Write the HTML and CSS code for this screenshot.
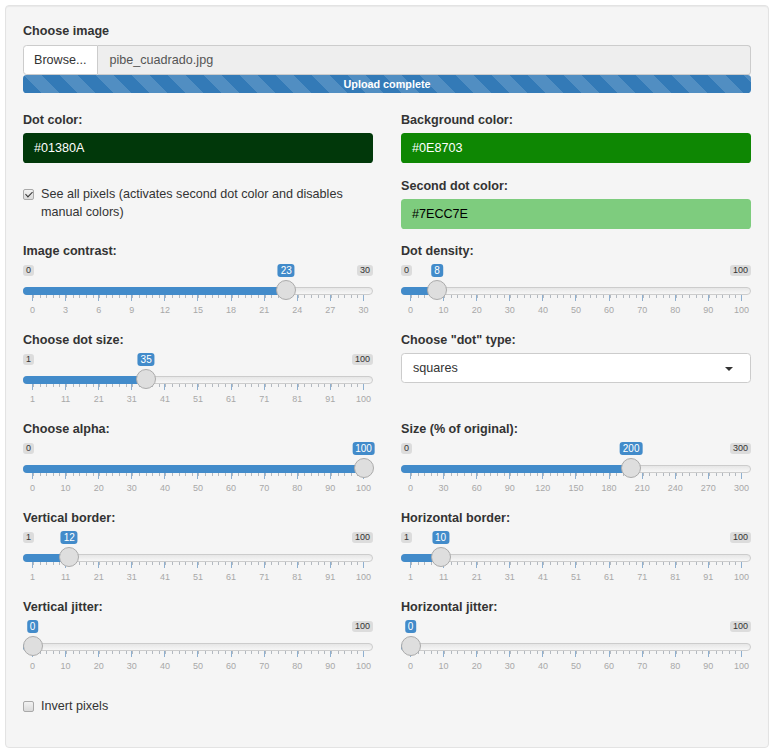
FILE: index.html
```html
<!DOCTYPE html>
<html>
<head>
<meta charset="utf-8">
<title>Dots</title>
<link rel="stylesheet" href="styles.css">
</head>
<body>
<div class="well">
  <div class="form-group file-group">
    <label class="control-label">Choose image</label>
    <div class="input-group">
      <span class="btn-browse">Browse...</span>
      <span class="file-name">pibe_cuadrado.jpg</span>
    </div>
    <div class="progress"><div class="progress-bar">Upload complete</div></div>
  </div>

  <div class="cols">
    <div class="form-group">
      <label class="control-label">Dot color:</label>
      <div class="color-input sw-dot">#01380A</div>
    </div>
    <div class="form-group">
      <label class="control-label">Background color:</label>
      <div class="color-input sw-bg">#0E8703</div>
    </div>

    <div class="checkbox first">
      <label><input class="cb" type="checkbox" checked><span>See all pixels (activates second dot color and disables manual colors)</span></label>
    </div>
    <div class="form-group tight">
      <label class="control-label">Second dot color:</label>
      <div class="color-input sw-second">#7ECC7E</div>
    </div>

    <div class="form-group">
      <label class="control-label">Image contrast:</label>
      <div class="irs" style="--p:0.76667">
        <span class="irs-line"></span><span class="irs-bar"></span>
        <span class="irs-min">0</span><span class="irs-max">30</span>
        <span class="irs-single">23</span><span class="irs-handle"></span>
        <div class="irs-grid">
          <span class="t"><i></i><b>0</b></span><span class="t"><i></i><b>3</b></span><span class="t"><i></i><b>6</b></span><span class="t"><i></i><b>9</b></span><span class="t"><i></i><b>12</b></span><span class="t"><i></i><b>15</b></span><span class="t"><i></i><b>18</b></span><span class="t"><i></i><b>21</b></span><span class="t"><i></i><b>24</b></span><span class="t"><i></i><b>27</b></span><span class="t"><i></i><b>30</b></span>
        </div>
      </div>
    </div>
    <div class="form-group">
      <label class="control-label">Dot density:</label>
      <div class="irs" style="--p:0.08">
        <span class="irs-line"></span><span class="irs-bar"></span>
        <span class="irs-min">0</span><span class="irs-max">100</span>
        <span class="irs-single">8</span><span class="irs-handle"></span>
        <div class="irs-grid">
          <span class="t"><i></i><b>0</b></span><span class="t"><i></i><b>10</b></span><span class="t"><i></i><b>20</b></span><span class="t"><i></i><b>30</b></span><span class="t"><i></i><b>40</b></span><span class="t"><i></i><b>50</b></span><span class="t"><i></i><b>60</b></span><span class="t"><i></i><b>70</b></span><span class="t"><i></i><b>80</b></span><span class="t"><i></i><b>90</b></span><span class="t"><i></i><b>100</b></span>
        </div>
      </div>
    </div>

    <div class="form-group">
      <label class="control-label">Choose dot size:</label>
      <div class="irs" style="--p:0.34343">
        <span class="irs-line"></span><span class="irs-bar"></span>
        <span class="irs-min">1</span><span class="irs-max">100</span>
        <span class="irs-single">35</span><span class="irs-handle"></span>
        <div class="irs-grid">
          <span class="t"><i></i><b>1</b></span><span class="t"><i></i><b>11</b></span><span class="t"><i></i><b>21</b></span><span class="t"><i></i><b>31</b></span><span class="t"><i></i><b>41</b></span><span class="t"><i></i><b>51</b></span><span class="t"><i></i><b>61</b></span><span class="t"><i></i><b>71</b></span><span class="t"><i></i><b>81</b></span><span class="t"><i></i><b>91</b></span><span class="t"><i></i><b>100</b></span>
        </div>
      </div>
    </div>
    <div class="form-group">
      <label class="control-label">Choose "dot" type:</label>
      <div class="select">squares</div>
    </div>

    <div class="form-group">
      <label class="control-label">Choose alpha:</label>
      <div class="irs" style="--p:1">
        <span class="irs-line"></span><span class="irs-bar"></span>
        <span class="irs-min">0</span>
        <span class="irs-single">100</span><span class="irs-handle"></span>
        <div class="irs-grid">
          <span class="t"><i></i><b>0</b></span><span class="t"><i></i><b>10</b></span><span class="t"><i></i><b>20</b></span><span class="t"><i></i><b>30</b></span><span class="t"><i></i><b>40</b></span><span class="t"><i></i><b>50</b></span><span class="t"><i></i><b>60</b></span><span class="t"><i></i><b>70</b></span><span class="t"><i></i><b>80</b></span><span class="t"><i></i><b>90</b></span><span class="t"><i></i><b>100</b></span>
        </div>
      </div>
    </div>
    <div class="form-group">
      <label class="control-label">Size (% of original):</label>
      <div class="irs" style="--p:0.66667">
        <span class="irs-line"></span><span class="irs-bar"></span>
        <span class="irs-min">0</span><span class="irs-max">300</span>
        <span class="irs-single">200</span><span class="irs-handle"></span>
        <div class="irs-grid">
          <span class="t"><i></i><b>0</b></span><span class="t"><i></i><b>30</b></span><span class="t"><i></i><b>60</b></span><span class="t"><i></i><b>90</b></span><span class="t"><i></i><b>120</b></span><span class="t"><i></i><b>150</b></span><span class="t"><i></i><b>180</b></span><span class="t"><i></i><b>210</b></span><span class="t"><i></i><b>240</b></span><span class="t"><i></i><b>270</b></span><span class="t"><i></i><b>300</b></span>
        </div>
      </div>
    </div>

    <div class="form-group">
      <label class="control-label">Vertical border:</label>
      <div class="irs" style="--p:0.11111">
        <span class="irs-line"></span><span class="irs-bar"></span>
        <span class="irs-min">1</span><span class="irs-max">100</span>
        <span class="irs-single">12</span><span class="irs-handle"></span>
        <div class="irs-grid">
          <span class="t"><i></i><b>1</b></span><span class="t"><i></i><b>11</b></span><span class="t"><i></i><b>21</b></span><span class="t"><i></i><b>31</b></span><span class="t"><i></i><b>41</b></span><span class="t"><i></i><b>51</b></span><span class="t"><i></i><b>61</b></span><span class="t"><i></i><b>71</b></span><span class="t"><i></i><b>81</b></span><span class="t"><i></i><b>91</b></span><span class="t"><i></i><b>100</b></span>
        </div>
      </div>
    </div>
    <div class="form-group">
      <label class="control-label">Horizontal border:</label>
      <div class="irs" style="--p:0.09091">
        <span class="irs-line"></span><span class="irs-bar"></span>
        <span class="irs-min">1</span><span class="irs-max">100</span>
        <span class="irs-single">10</span><span class="irs-handle"></span>
        <div class="irs-grid">
          <span class="t"><i></i><b>1</b></span><span class="t"><i></i><b>11</b></span><span class="t"><i></i><b>21</b></span><span class="t"><i></i><b>31</b></span><span class="t"><i></i><b>41</b></span><span class="t"><i></i><b>51</b></span><span class="t"><i></i><b>61</b></span><span class="t"><i></i><b>71</b></span><span class="t"><i></i><b>81</b></span><span class="t"><i></i><b>91</b></span><span class="t"><i></i><b>100</b></span>
        </div>
      </div>
    </div>

    <div class="form-group">
      <label class="control-label">Vertical jitter:</label>
      <div class="irs" style="--p:0">
        <span class="irs-line"></span><span class="irs-bar"></span>
        <span class="irs-max">100</span>
        <span class="irs-single">0</span><span class="irs-handle"></span>
        <div class="irs-grid">
          <span class="t"><i></i><b>0</b></span><span class="t"><i></i><b>10</b></span><span class="t"><i></i><b>20</b></span><span class="t"><i></i><b>30</b></span><span class="t"><i></i><b>40</b></span><span class="t"><i></i><b>50</b></span><span class="t"><i></i><b>60</b></span><span class="t"><i></i><b>70</b></span><span class="t"><i></i><b>80</b></span><span class="t"><i></i><b>90</b></span><span class="t"><i></i><b>100</b></span>
        </div>
      </div>
    </div>
    <div class="form-group">
      <label class="control-label">Horizontal jitter:</label>
      <div class="irs" style="--p:0">
        <span class="irs-line"></span><span class="irs-bar"></span>
        <span class="irs-max">100</span>
        <span class="irs-single">0</span><span class="irs-handle"></span>
        <div class="irs-grid">
          <span class="t"><i></i><b>0</b></span><span class="t"><i></i><b>10</b></span><span class="t"><i></i><b>20</b></span><span class="t"><i></i><b>30</b></span><span class="t"><i></i><b>40</b></span><span class="t"><i></i><b>50</b></span><span class="t"><i></i><b>60</b></span><span class="t"><i></i><b>70</b></span><span class="t"><i></i><b>80</b></span><span class="t"><i></i><b>90</b></span><span class="t"><i></i><b>100</b></span>
        </div>
      </div>
    </div>

    <div class="checkbox last">
      <label><input class="cb" type="checkbox"><span>Invert pixels</span></label>
    </div>
  </div>
</div>
</body>
</html>
```

FILE: styles.css
```css
* { box-sizing: border-box; }
html, body { margin: 0; padding: 0; background: #fff; }
body {
  font-family: "Liberation Sans", Arial, sans-serif;
  font-size: 12.6px;
  line-height: 18px;
  color: #333;
}

.well {
  margin: 5px 0 0 5px;
  width: 764px;
  height: 743px;
  padding: 16px 17px 17px;
  background: #f5f5f5;
  border: 1px solid #e3e3e3;
  border-radius: 4px;
  box-shadow: inset 0 1px 1px rgba(0, 0, 0, .05);
}

.control-label {
  display: block;
  font-weight: bold;
  margin-bottom: 4.5px;
}

.form-group { margin-bottom: 13.5px; }
.form-group.tight { margin-bottom: 12.5px; }
.file-group { margin-bottom: 18px; }

/* file input */
.input-group { display: flex; height: 30px; }
.btn-browse {
  padding: 0 10px;
  line-height: 28px;
  background: #fff;
  border: 1px solid #ccc;
  border-radius: 3.6px 0 0 3.6px;
  color: #333;
}
.file-name {
  flex: 1;
  padding: 0 12px;
  line-height: 28px;
  background: #eee;
  border: 1px solid #ccc;
  border-left: 0;
  border-radius: 0 3.6px 3.6px 0;
  color: #555;
}
.progress {
  height: 18px;
  border-radius: 3.6px;
  overflow: hidden;
  background: #f5f5f5;
}
.progress-bar {
  height: 100%;
  background-color: #337ab7;
  background-image: linear-gradient(45deg, rgba(255,255,255,.15) 25%, transparent 25%, transparent 50%, rgba(255,255,255,.15) 50%, rgba(255,255,255,.15) 75%, transparent 75%, transparent);
  background-size: 36px 36px;
  color: #fff;
  font-size: 10.8px;
  font-weight: bold;
  text-align: center;
  line-height: 18px;
}

/* two column layout */
.cols {
  display: grid;
  grid-template-columns: 350px 350px;
  column-gap: 28px;
  align-items: start;
}

/* colour inputs */
.color-input {
  height: 30px;
  padding: 0 11px;
  line-height: 30px;
  border-radius: 3.6px;
}
.sw-dot { background: #01380A; color: #fff; }
.sw-bg { background: #0E8703; color: #fff; }
.sw-second { background: #7ECC7E; color: #000; }

/* checkboxes */
.checkbox.first { margin-top: 8px; }
.checkbox.last { margin-top: 10px; }
.checkbox label { display: flex; gap: 7px; }
.cb {
  -webkit-appearance: none;
  appearance: none;
  flex: none;
  position: relative;
  width: 11px;
  height: 11px;
  margin: 4px 0 0 0;
  border: 1px solid #a9a9a9;
  border-radius: 2px;
  background: linear-gradient(#f2f2f2, #dadada);
}
.cb:checked::after {
  content: "";
  position: absolute;
  left: 3px;
  top: 0.5px;
  width: 3px;
  height: 6px;
  border: solid #333;
  border-width: 0 1.5px 1.5px 0;
  transform: rotate(45deg);
}

/* select */
.select {
  position: relative;
  height: 30px;
  line-height: 28px;
  padding: 0 11px;
  background: #fff;
  border: 1px solid #ccc;
  border-radius: 3.6px;
  color: #333;
}
.select::after {
  content: "";
  position: absolute;
  right: 17px;
  top: 13px;
  border: 4px solid transparent;
  border-top-color: #333;
  border-bottom: 0;
}

/* range slider */
.irs {
  position: relative;
  height: 53px;
  padding-top: 31px;
}
.irs-line {
  position: absolute;
  left: 0;
  right: 0;
  top: 23px;
  height: 8px;
  border: 1px solid #ccc;
  border-radius: 8px;
  background: linear-gradient(to bottom, #dedede -50%, #fff 150%);
}
.irs-bar {
  position: absolute;
  left: 0;
  top: 23px;
  height: 8px;
  width: calc(9.5px + var(--p) * (100% - 19px));
  background: #428bca;
  border-radius: 8px 0 0 8px;
}
.irs-handle {
  position: absolute;
  top: 16px;
  left: calc(var(--p) * (100% - 19px) - 0.5px);
  width: 20px;
  height: 20px;
  border-radius: 50%;
  border: 1px solid #ababab;
  background: #dedede;
}
.irs-min, .irs-max {
  position: absolute;
  top: 1px;
  padding: 0 3px;
  font-size: 9px;
  line-height: 11px;
  background: rgba(0, 0, 0, .1);
  border-radius: 3px;
  color: #333;
}
.irs-min { left: 0; }
.irs-max { right: 0; }
.irs-single {
  position: absolute;
  top: 0;
  left: calc(9.5px + var(--p) * (100% - 19px));
  transform: translateX(-50%);
  padding: 0 3px;
  font-size: 10px;
  line-height: 13px;
  background: #428bca;
  color: #fff;
  border-radius: 3px;
}
.irs-grid {
  margin: 0 9.5px;
  display: flex;
  justify-content: space-between;
  background: repeating-linear-gradient(to right, #b3b9c0 0, #b3b9c0 1px, transparent 1px, transparent 2%) 0 0 / 100% 3px no-repeat;
}
.t {
  width: 0;
  display: flex;
  flex-direction: column;
  align-items: center;
}
.t i {
  display: block;
  flex: none;
  width: 1px;
  height: 6px;
  background: #8fb0d0;
}
.t b {
  font-weight: normal;
  font-size: 9px;
  line-height: 10px;
  margin-top: 4px;
  color: #a8a8a8;
  white-space: nowrap;
}
```
